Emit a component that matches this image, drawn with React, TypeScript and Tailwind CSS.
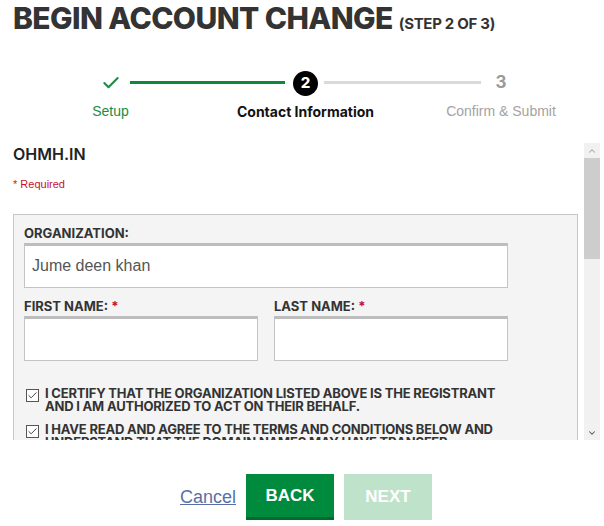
import { Check, ChevronUp, ChevronDown } from 'lucide-react';

const GEO = { fontFamily: 'Inter, "Noto Sans", sans-serif' };
const ARIAL = { fontFamily: '"Liberation Sans", Arial, sans-serif' };

const STEPS = [
  { label: 'Setup', state: 'done' },
  { label: 'Contact Information', state: 'active' },
  { label: 'Confirm & Submit', state: 'todo' },
];

function Field({ label, required, value, className }: { label: string; required?: boolean; value?: string; className?: string }) {
  return (
    <div className={className}>
      <div className="text-[13px] font-bold leading-4 text-[#333]" style={GEO}>
        {label}
        {required && <span className="text-[#c8102e]"> *</span>}
      </div>
      <div
        className="mt-[2px] h-[45px] bg-white border border-[#c4c4c4] border-t-[3px] border-t-[#bdbdbd] px-[7px] flex items-center text-[16px] text-[#555]"
        style={ARIAL}
      >
        {value}
      </div>
    </div>
  );
}

function CheckRow({ text }: { text: string }) {
  return (
    <div className="flex items-start gap-[6px]">
      <div className="mt-[2px] w-[13px] h-[13px] shrink-0 border border-[#555] bg-white flex items-center justify-center">
        <Check size={11} strokeWidth={2} className="text-[#333]" />
      </div>
      <p className="text-[13px] font-bold leading-[13px] text-[#333] uppercase tracking-[-0.2px] w-[470px]" style={GEO}>
        {text}
      </p>
    </div>
  );
}

export default function App() {
  return (
    <div className="w-[604px] h-[526px] bg-white overflow-hidden">
      {/* Title */}
      <div className="px-[13px] flex items-baseline gap-[6px] text-[#333]" style={GEO}>
        <h1 className="text-[30px] leading-[36px] font-extrabold tracking-[-0.6px]">BEGIN ACCOUNT CHANGE</h1>
        <span className="text-[15px] font-bold tracking-[-0.3px]">(STEP 2 OF 3)</span>
      </div>

      {/* Stepper */}
      <div className="relative mt-[35px] ml-[13px] w-[586px] h-[69px]">
        <div className="absolute left-[117px] top-[10px] w-[155px] h-[3px] bg-[#0a8a3f]" />
        <div className="absolute left-[311px] top-[10px] w-[157px] h-[3px] bg-[#dadada]" />
        <div className="grid grid-cols-[195px_195px_196px]">
          {STEPS.map((s) => (
            <div key={s.label} className="flex flex-col items-center">
              <div className="h-[24px] flex items-center justify-center">
                {s.state === 'done' && <Check size={20} strokeWidth={2.5} className="text-[#1c8c45]" />}
                {s.state === 'active' && (
                  <div className="w-[25px] h-[25px] rounded-full bg-black text-white flex items-center justify-center text-[15px] font-extrabold" style={GEO}>
                    2
                  </div>
                )}
                {s.state === 'todo' && (
                  <span className="text-[17px] font-bold text-[#9a9a9a]" style={GEO}>3</span>
                )}
              </div>
              <div
                className={
                  s.state === 'done'
                    ? 'mt-[6px] text-[14px] text-[#1c8c45]'
                    : s.state === 'active'
                      ? 'mt-[6px] text-[14px] font-bold text-[#111]'
                      : 'mt-[6px] text-[14px] text-[#a3a3a3]'
                }
                style={s.state === 'active' ? GEO : ARIAL}
              >
                {s.label}
              </div>
            </div>
          ))}
        </div>
      </div>

      {/* Scroll area */}
      <div className="h-[300px] flex">
        <div className="flex-1 overflow-hidden pl-[13px] pr-[6px]">
          <div className="pt-[2px] text-[16px] font-semibold text-[#222]" style={GEO}>OHMH.IN</div>
          <div className="mt-[10px] text-[11px] text-[#c8102e]" style={ARIAL}>* Required</div>
          <div className="mt-[21px] border border-[#c8c8c8] bg-[#f4f4f4] px-[10px] pt-[10px] pb-6">
            <Field label="ORGANIZATION:" value="Jume deen khan" className="w-[484px]" />
            <div className="mt-[10px] flex gap-[16px]">
              <Field label="FIRST NAME:" required className="w-[234px]" />
              <Field label="LAST NAME:" required className="w-[234px]" />
            </div>
            <div className="mt-[26px] pl-[2px] flex flex-col gap-[10px]">
              <CheckRow text="I certify that the organization listed above is the registrant and I am authorized to act on their behalf." />
              <CheckRow text="I have read and agree to the terms and conditions below and understand that the domain names may have transfer restrictions." />
            </div>
          </div>
        </div>
        {/* Scrollbar */}
        <div className="mt-[3px] w-[16px] mr-[4px] bg-[#f1f1f1] flex flex-col">
          <div className="h-[15px] flex items-center justify-center">
            <ChevronUp size={10} strokeWidth={2.5} className="text-[#a3a3a3]" />
          </div>
          <div className="h-[101px] bg-[#cdcdcd]" />
          <div className="flex-1" />
          <div className="h-[15px] flex items-center justify-center">
            <ChevronDown size={10} strokeWidth={2.5} className="text-[#505050]" />
          </div>
        </div>
      </div>

      {/* Actions */}
      <div className="mt-[34px] flex items-center justify-center gap-[10px] pl-[8px]">
        <a href="#" className="text-[18px] text-[#5a6fa6] underline" style={ARIAL}>Cancel</a>
        <button className="w-[88px] h-[46px] bg-[#008a3d] border-b-[3px] border-b-[#006b2e] text-white text-[17px] font-bold" style={ARIAL}>
          BACK
        </button>
        <button className="w-[88px] h-[46px] bg-[#bfe2cb] text-white text-[17px] font-bold" style={ARIAL}>
          NEXT
        </button>
      </div>
    </div>
  );
}
